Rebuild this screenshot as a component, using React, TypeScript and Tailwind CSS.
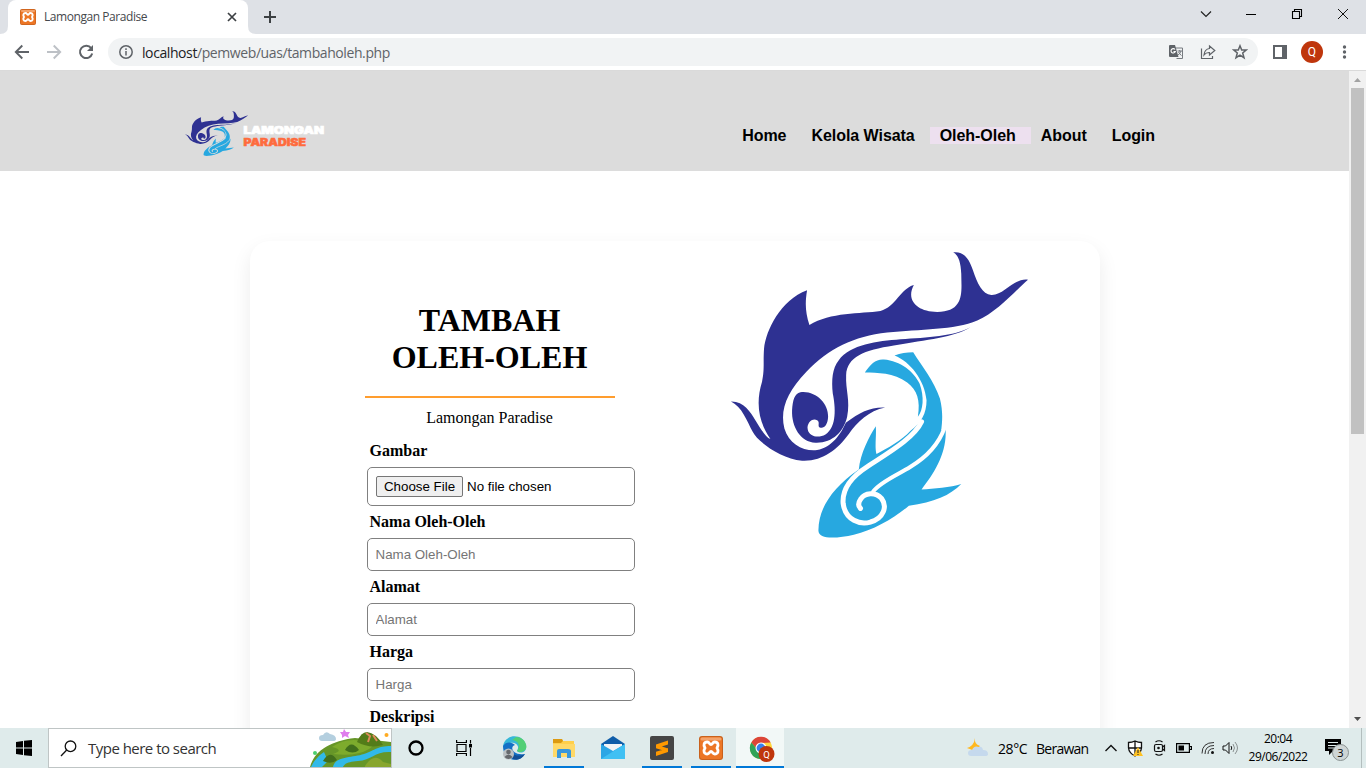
import React from 'react';

function FishLogo({ gap, className }: { gap: string; className: string }) {
  return (
    <svg className={className} viewBox="32 32 890 862" preserveAspectRatio="none">
      <g fill="#2e3192">
        <path d="M260 150C254 185 254 215 267 254C330 215 420 221 480 212C525 200 540 145 580 134C555 180 590 215 650 215C735 215 722 150 722 100C720 60 712 45 698 36C730 32 745 55 757 90C770 130 785 162 812 164C850 166 880 112 922 118C890 145 830 215 770 241C700 270 600 267 500 277C400 288 325 325 258 395C200 455 178 510 192 565C206 612 250 635 290 630C335 622 362 580 376 548C420 515 450 500 494 502C445 512 410 545 385 582C350 630 305 665 245 662C180 655 112 605 97 575C80 543 65 500 32 484C70 483 90 515 105 540C120 565 135 590 150 597C115 545 105 490 125 425C133 385 128 370 131 325C137 270 180 180 260 150Z" />
        <path d="M750 261C700 292 620 298 520 316C430 330 380 350 377 405C375 450 390 480 380 530C370 575 335 610 285 608C240 605 213 560 215 510C217 480 222 460 240 456C285 450 325 490 323 530C322 555 310 567 298 562C290 558 300 545 290 540C275 532 258 550 262 568C266 590 295 595 315 583C350 560 345 500 337 460C333 420 335 385 355 360C390 312 470 303 540 297C620 292 700 288 750 261Z" />
      </g>
      <g fill="#27a8e0">
        <path d="M433 397C450 372 466 356 490 358C540 362 580 395 597 430C612 470 608 510 592 530C600 480 590 450 560 427C520 397 470 398 433 397Z" />
        <path d="M522 346C540 338 558 336 578 336C605 380 640 420 658 475C668 515 665 545 662 570L675 565C680 640 640 700 603 748C640 747 690 742 722 732C690 765 640 788 565 797C520 835 460 870 400 884C350 895 292 900 294 870C295 800 340 740 415 688C420 640 445 590 466 558C468 590 462 620 468 642C500 625 545 600 570 572C602 548 618 520 618 480C612 420 570 365 522 346Z" />
      </g>
      <g fill="none" stroke={gap} strokeLinecap="round">
        <path strokeWidth="15" d="M603 545C580 595 500 640 440 680C390 712 365 750 368 790C375 842 420 855 450 846C488 836 502 800 483 775C465 755 433 757 420 778C412 790 413 798 420 805" />
        <path strokeWidth="12" d="M672 563C655 610 620 650 570 680C530 705 480 725 458 754" />
      </g>
    </svg>
  );
}

function Xampp({ className }: { className: string }) {
  return (
    <svg className={className} viewBox="0 0 24 24">
      <rect width="24" height="24" rx="3" fill="#c9611c" />
      <rect x="1" y="1" width="22" height="22" rx="2.500" fill="#ec7625" />
      <rect x="1.500" y="1.500" width="21" height="3" rx="1.500" fill="#f3a36c" />
      <path d="M8.300 6C5 6 4 9 6 12C4 15 5 18 8.300 18C10.600 18 10.400 15.400 12 15.400S13.400 18 15.700 18C19 18 20 15 18 12C20 9 19 6 15.700 6C13.400 6 13.600 8.600 12 8.600S10.600 6 8.300 6Z" fill="none" stroke="#fff" strokeWidth="2.900" strokeLinejoin="round" />
    </svg>
  );
}

function TabStrip() {
  return (
    <div className="flex h-[34px] shrink-0 bg-[#dee1e6]">
      <svg className="h-[34px] w-2" viewBox="0 0 8 34"><path d="M8 26V34H0Q8 34 8 26" fill="#fff" /></svg>
      <div className="flex h-[34px] w-[240px] items-center rounded-t-lg bg-white pl-3">
        <Xampp className="h-4 w-4" />
        <span className="ml-2 w-[183px] whitespace-nowrap text-[12px] tracking-[-0.44px] text-[#45484c]">Lamongan Paradise</span>
        <svg className="h-2.5 w-2.5" viewBox="0 0 10 10" stroke="#3c4043" strokeWidth="1.7"><path d="M1 1L9 9M9 1L1 9" /></svg>
      </div>
      <svg className="h-[34px] w-2" viewBox="0 0 8 34"><path d="M0 26V34H8Q0 34 0 26" fill="#fff" /></svg>
      <svg className="ml-2 mt-[11px] h-3 w-3" viewBox="0 0 12 12" stroke="#3c4043" strokeWidth="2"><path d="M6 0V12M0 6H12" /></svg>
      <div className="ml-auto flex items-start pt-2">
        <svg className="mr-[33px] h-3 w-3" viewBox="0 0 12 12" fill="none" stroke="#222" strokeWidth="1.200"><path d="M1 3.500L6 8.500L11 3.500" /></svg>
        <svg className="mr-[34px] h-3 w-3" viewBox="0 0 12 12" stroke="#000"><path d="M1 6.500H11" /></svg>
        <svg className="mr-[34px] h-3 w-3" viewBox="0 0 12 12" fill="none" stroke="#000" strokeWidth="1.100"><path d="M1.500 3.500H8.500V10.500H1.500ZM3.500 3.500V1.500H10.500V8.500H8.500" /></svg>
        <svg className="mr-[17px] h-3 w-3" viewBox="0 0 12 12" stroke="#111"><path d="M1 1L11 11M11 1L1 11" /></svg>
      </div>
    </div>
  );
}

function Toolbar() {
  return (
    <div className="flex h-9 shrink-0 items-center bg-white">
      <svg className="ml-[14px] h-4 w-4" viewBox="0 0 16 16" fill="none" stroke="#5f6368" strokeWidth="1.900"><path d="M15 8H2M8.300 1.500L1.800 8L8.300 14.500" /></svg>
      <svg className="ml-4 h-4 w-4" viewBox="0 0 16 16" fill="none" stroke="#bdc1c6" strokeWidth="1.900"><path d="M1 8H14M7.700 1.500L14.200 8L7.700 14.500" /></svg>
      <svg className="ml-4 h-4 w-4" viewBox="0 0 16 16"><path d="M13.200 4.200A6.200 6.200 0 1 0 14.200 9.500" fill="none" stroke="#5f6368" strokeWidth="2" /><path d="M15 1V7H9Z" fill="#5f6368" /></svg>
      <div className="ml-[14px] flex h-7 w-[1150px] items-center rounded-full bg-[#f1f3f4] pl-[11px]">
        <svg className="h-[14px] w-[14px]" viewBox="0 0 14 14" fill="none" stroke="#5f6368" strokeWidth="1.500"><circle cx="7" cy="7" r="6.200" /><path d="M7 6V10.500M7 3.300V4.900" /></svg>
        <span className="ml-[9px] whitespace-nowrap text-[14px] tracking-[-0.41px] text-[#5f6368]"><span className="text-[#202124]">localhost</span>/pemweb/uas/tambaholeh.php</span>
        <svg className="ml-auto h-[15px] w-[15px]" viewBox="0 0 15 15"><path d="M6 3H13.500V13.500H7.500" fill="none" stroke="#777b80" /><path d="M1 0H6L9.500 12H1Q0 12 0 11V1Q0 0 1 0" fill="#5f6368" /><path d="M6 4.500A2.200 2.200 0 1 0 6.300 6.500H4.500" fill="none" stroke="#fff" strokeWidth="1.100" /><path d="M8.500 6H13M10.700 5V6.500M12 6Q11 9 9 10M9.500 7Q11 9.500 12.500 10.500" fill="none" stroke="#777b80" /></svg>
        <svg className="ml-[16px] h-4 w-4" viewBox="0 0 16 16" fill="none" stroke="#5f6368" strokeWidth="1.200"><path d="M1.500 4.500V14.500H12.500V12" /><path d="M9.500 2L14.800 6.500L9.500 11V8.500Q6 8.300 4 11Q4.500 5.200 9.500 4.500Z" /></svg>
        <svg className="ml-[16px] mr-[10px] h-4 w-4" viewBox="0 0 16 16" fill="none" stroke="#5f6368" strokeWidth="1.500"><path d="M8 1.800L9.700 6H14.200L10.700 9L12 13.700L8 11.100L4 13.700L5.300 9L1.800 6H6.300Z" /></svg>
      </div>
      <svg className="ml-[15px] h-[14px] w-[14px]" viewBox="0 0 14 14"><path d="M0 0H14V14H0ZM2 2V12H9V2Z" fill="#5f6368" fillRule="evenodd" /></svg>
      <div className="ml-[14px] flex h-[22px] w-[22px] items-center justify-center rounded-full bg-[#bf360c] font-['Roboto',sans-serif] text-[12px] text-white">Q</div>
      <svg className="ml-[19px] h-4 w-[5px]" viewBox="0 0 5 16" fill="#5f6368"><circle cx="2.500" cy="3" r="1.700" /><circle cx="2.500" cy="8" r="1.700" /><circle cx="2.500" cy="13" r="1.700" /></svg>
    </div>
  );
}

function SiteHeader() {
  return (
    <header className="flex h-[100px] shrink-0 items-start bg-[#dcdcdc] pl-[185px] font-['Liberation_Sans',sans-serif]">
      <FishLogo gap="#dcdcdc" className="mt-[40px] h-[45px] w-[63px]" />
      <svg className="ml-[-6px] mt-[51px] h-8 w-[90px] font-['Inter',sans-serif] font-black" viewBox="0 0 90 32" fontSize="10.500">
        <text x="1.500" y="11.800" fill="#fff" stroke="#fff" strokeWidth=".7" textLength="80.500" lengthAdjust="spacingAndGlyphs">LAMONGAN</text>
        <text x="1.500" y="23.700" fill="#ff6b3d" stroke="#ff6b3d" strokeWidth=".5" fontSize="10" textLength="62.500" lengthAdjust="spacingAndGlyphs">PARADISE</text>
      </svg>
      <nav className="ml-auto mr-[179px] mt-[56px] flex text-[16px] font-bold leading-[17px] tracking-[-0.05px] text-black">
        {['Home', 'Kelola Wisata', 'Oleh-Oleh', 'About', 'Login'].map((t) => (
          <a key={t} className={t === 'Oleh-Oleh' ? 'bg-[#ede0ef] pl-[10px] pr-[15px]' : 'pl-[10px] pr-[15px]'}>{t}</a>
        ))}
      </nav>
    </header>
  );
}

function Field({ label }: { label: string }) {
  return (
    <>
      <label className="ml-[4.5px] block h-8 pt-[7px] text-[16px] font-bold leading-[18px]">{label}</label>
      <input placeholder={label} className="ml-0.5 block h-[33px] w-[268px] rounded-[5px] border border-[#808080] bg-white px-[7.500px] font-['Liberation_Sans',sans-serif] text-[13.333px] placeholder:text-[#757575]" />
    </>
  );
}

function Page() {
  return (
    <div className="flex min-h-0 flex-1 border-t border-[#dadada] bg-white">
      <main className="flex w-[1349px] flex-col overflow-hidden">
        <SiteHeader />
        <section className="ml-[250px] mt-[70px] flex h-[700px] w-[850px] shrink-0 rounded-[20px] bg-white font-['Liberation_Serif',serif] text-black shadow-[0_8px_20px_rgba(0,0,0,0.080)]">
          <form className="ml-[115px] w-[270px] pt-[61px]">
            <h1 className="w-[249px] text-center text-[32px] font-bold leading-[37px]">TAMBAH<br />OLEH-OLEH</h1>
            <div className="mt-[20px] h-[2px] w-[250px] bg-[#ff9d2e]" />
            <p className="mt-[11px] w-[249px] text-center text-[16px] leading-[18px]">Lamongan Paradise</p>
            <label className="ml-[4.5px] mt-[15px] block h-[25px] text-[16px] font-bold leading-[18px]">Gambar</label>
            <div className="ml-0.5 flex h-[39px] w-[268px] items-center rounded-[5px] border border-[#808080] pl-2 font-['Liberation_Sans',sans-serif] text-[13.333px]">
              <button type="button" className="h-[21px] w-[87px] whitespace-nowrap rounded-[2px] border border-[#767676] bg-[#efefef]">Choose File</button>
              <span className="ml-1">No file chosen</span>
            </div>
            <Field label="Nama Oleh-Oleh" />
            <Field label="Alamat" />
            <Field label="Harga" />
            <Field label="Deskripsi" />
          </form>
          <FishLogo gap="#fff" className="ml-[95.5px] mt-[10px] h-[287px] w-[297px]" />
        </section>
      </main>
      <div className="flex w-[17px] flex-col items-center bg-[#f1f1f1]">
        <svg className="h-[17px] w-[17px]" viewBox="0 0 17 17"><path d="M5 11L8.500 7L12 11Z" fill="#a3a3a3" /></svg>
        <div className="h-[346px] w-[13px] bg-[#c1c1c1]" />
        <svg className="mt-auto h-[17px] w-[17px]" viewBox="0 0 17 17"><path d="M5 6L8.500 10L12 6Z" fill="#505050" /></svg>
      </div>
    </div>
  );
}

function SearchArt() {
  return (
    <svg className="ml-auto h-[38px] w-[81px]" viewBox="0 0 81 38">
      <path d="M12 12Q9 12 9 9Q9 6 13 6Q16 1 20 5Q26 6 26 10Q26 12 23 12Z" fill="#b4cfdf" />
      <path d="M34 0L36 3L40 3L38 6L39 9L35 7L32 9L32 6L30 3L33 3Z" fill="#df7ded" />
      <circle cx="76.500" cy="6" r="2" fill="#ffab22" /><circle cx="5" cy="24" r="2" fill="#4bcf70" />
      <path d="M0 38C4 22 20 12 45 9L81 13V38Z" fill="#669628" />
      <path d="M1 38Q5 29 14 23L18 32L12 38ZM23 38C25 27 42 29 54 25S67 17 81 17V23C65 22 62 31 48 32C38 33 35 34 33 38Z" fill="#31b9e8" />
      <path d="M22 18Q37 7 57 13Q66 16 59 20Q46 28 23 25Q35 21 22 18" fill="#7dab2d" />
      <path d="M47 13Q51 3 57 3Q66 4 73 16Q60 20 47 13" fill="#537c19" /><path d="M56 4L60 7L58 13M63 6L67 12" stroke="#df8a5b" strokeWidth="2" fill="none" />
      <path d="M35 21Q41 10 49 21Q43 26 35 21M13 32Q20 20 27 31Q21 36 13 32" fill="#416f1c" />
      <path d="M55 37Q64 23 73 33L81 35V38H55Z" fill="#88a62e" />
    </svg>
  );
}

function Taskbar() {
  return (
    <div className="flex h-10 shrink-0 items-center bg-[#dfebeb] text-black">
      <svg className="ml-4 h-4 w-4" viewBox="0 0 16 16"><path d="M0 2L7 1V7.500H0ZM8 .8L16 0V7.500H8ZM0 8.500H7V15L0 14ZM8 8.500H16V16L8 15.200Z" /></svg>
      <div className="ml-4 flex h-10 w-[344px] items-center border border-[#bfc5c5] bg-white">
        <svg className="ml-[11px] h-[17px] w-[17px]" viewBox="0 0 17 17" fill="none" stroke="#111" strokeWidth="1.300"><circle cx="10.500" cy="6.300" r="5.300" /><path d="M6.700 10L1 16" /></svg>
        <span className="ml-[11px] whitespace-nowrap text-[15px] tracking-[-0.520px] text-[#333]">Type here to search</span>
        <SearchArt />
      </div>
      <svg className="ml-4 h-4 w-4" viewBox="0 0 16 16" fill="none" stroke="#000" strokeWidth="2.300"><circle cx="8" cy="8" r="6.500" /></svg>
      <svg className="ml-8 h-4 w-4" viewBox="0 0 16 16" fill="none" stroke="#000" strokeWidth="1.200"><path d="M.6 0V2.500H10.400V0M.6 16V13.500H10.400V16M1 4.500H10V11.500H1ZM14.500 0V3.500M14.500 8V16" /><path d="M13 4H16V7.500H13Z" fill="#000" stroke="none" /></svg>
      <div className="ml-[17px] mr-[6px] flex h-10 w-[49px] items-center justify-center">
        <svg className="mr-[-1px] h-[25px] w-[25px]" viewBox="0 0 25 25"><path d="M1 11C2-3 22-3 24 10C25 17 18 18 15 15C20 7 7 3 1 11" fill="#36b7d8" /><path d="M14 1C22 1 27 10 23 14C20 17 16 16 15 15C19 9 16 5 10 4Z" fill="#52cf76" /><path d="M1 10C4 5 10 6 13 9C7 11 11 20 23 18C17 28 1 25 1 10" fill="#1470c6" /><path d="M9 12C8 18 15 22 23 18C19 25 12 25 9 21Z" fill="#124f96" /><circle cx="6.500" cy="18" r="5.500" fill="#b9bfc2" /><circle cx="6.500" cy="16" r="2.300" fill="#65696d" /><path d="M2.500 21Q6.500 16 10.500 21Q6.500 25 2.500 21" fill="#65696d" /></svg>
      </div>
      <div className="flex h-10 w-10 justify-center border-b-2 border-[#0078d7] pt-[9px]">
        <svg className="mt-0.5 h-[20px] w-[22px]" viewBox="0 0 22 20"><path d="M0 0H9L10 2H21V18H0Z" fill="#ffcf4b" /><path d="M0 0H9L10 2L8 4H0Z" fill="#dc9a12" /><path d="M0 5H22V18H0Z" fill="#ffd968" /><path d="M4 19V12Q4 10 6 10H15Q18 10 18 12V19H14V14H8V19Z" fill="#3897dd" /></svg>
      </div>
      <div className="flex h-10 w-[58px] items-center justify-center">
        <svg className="h-[24px] w-[24px]" viewBox="0 0 24 24"><path d="M0 8L12 0L24 8V14H0Z" fill="#0f5da9" /><path d="M3 8H21V16H3Z" fill="#f2f5f7" /><path d="M0 8L12 15L24 8V23H0Z" fill="#2ba6e5" /><path d="M0 23L24 8V23Z" fill="#40c0f3" /></svg>
      </div>
      <div className="flex h-10 w-10 justify-center border-b-2 border-[#0078d7] pt-2">
        <svg className="h-6 w-6" viewBox="0 0 24 24"><rect width="24" height="24" rx="2" fill="#454545" /><path d="M6 8.500L18 4.500V8.500L6 12.300ZM6 8.500L18 12.500V16L6 12.300ZM6 15.800L18 12V16L6 20Z" fill="#ff9900" /></svg>
      </div>
      <div className="ml-[9px] flex h-10 w-10 justify-center border-b-2 border-[#0078d7] pt-2"><Xampp className="h-6 w-6" /></div>
      <div className="ml-[5px] flex h-10 w-12 justify-center border-b-2 border-[#0078d7] bg-[#f2f8f7] pt-2">
        <svg className="ml-[3px] h-[27px] w-[26px] font-['Roboto',sans-serif]" viewBox="0 0 26 27"><circle cx="12" cy="12" r="11" fill="#ffd53d" /><path d="M2.300 6.500A11 11 0 0 1 21.700 6.500L12 7L8 13Z" fill="#dc4538" /><path d="M2.300 6.500A11 11 0 0 0 11 23L16 15L8 13Z" fill="#30a358" /><circle cx="12" cy="12" r="5.500" fill="#fff" /><circle cx="12" cy="12" r="4.400" fill="#387fec" /><circle cx="17.500" cy="18" r="8" fill="#bf360c" /><text x="17.500" y="21.500" textAnchor="middle" fontSize="9.500" fill="#fff">Q</text></svg>
      </div>
      <div className="ml-auto flex h-10 items-center">
        <svg className="h-5 w-[22px]" viewBox="0 0 22 20"><path d="M8 0Q7 6 13 8L8 13L0 10Q7 8 8 0" fill="#ffb81f" /><path d="M4 18Q1 18 1 15Q1 12 5 12Q7 7 12 9Q15 8 16 12Q21 12 21 16Q21 18 18 18Z" fill="#c5d9ed" /></svg>
        <span className="ml-[9px] w-[38px] whitespace-nowrap text-[14px] tracking-[-0.4px]">28°C</span>
        <span className="w-[69px] whitespace-nowrap text-[14px] tracking-[-0.75px]">Berawan</span>
        <svg className="h-3 w-3" viewBox="0 0 12 12" fill="none" stroke="#111" strokeWidth="1.400"><path d="M.5 9L6 3.500L11.500 9" /></svg>
        <svg className="ml-[10px] h-[17px] w-[16px]" viewBox="0 0 16 17"><path d="M8 1Q11 2.500 14.500 2.500V8Q14 13 8 16Q2 13 1.500 8V2.500Q5 2.500 8 1ZM8 1V16M1 8H15" fill="#fff" stroke="#111" strokeWidth="1.300" /><path d="M11 7L16 16H6Z" fill="#ffc222" /><path d="M11 10V13M11 14V15" stroke="#222" /></svg>
        <svg className="ml-[10px] h-4 w-[14px]" viewBox="0 0 14 16" fill="none" stroke="#111" strokeWidth="1.200"><rect x="1.500" y="4.500" width="8" height="7" rx="1.500" /><path d="M9.500 7L11.500 5.500V10.500L9.500 9M2.500 2Q6-.5 9.500 2M2.500 14Q6 16.500 9.500 14" /><circle cx="5.500" cy="8" r=".7" fill="#111" /></svg>
        <svg className="ml-[9px] h-[10px] w-[16px]" viewBox="0 0 16 10"><path d="M.6.600H13.400V9.400H.6ZM13.500 3.500H15.400V6.500H13.500" fill="none" stroke="#000" strokeWidth="1.200" /><path d="M2.500 2.500H8V7.500H2.500Z" /></svg>
        <svg className="ml-[9px] h-[14px] w-[14px]" viewBox="0 0 14 14" fill="none" stroke="#333"><path d="M1 12.500Q1 1.500 13 1.500M4 13Q4 4.500 13 4.500M7 13Q7 7.500 13 7.500" /><circle cx="11.500" cy="11.500" r="1.500" fill="#111" stroke="none" /></svg>
        <svg className="ml-[7px] h-[14px] w-[17px]" viewBox="0 0 17 14" fill="none" stroke="#111"><path d="M1 5H3.500L7 1.500V12.500L3.500 9H1ZM9 5Q10.500 7 9 9" /><path d="M11 3Q14 7 11 11M13 1Q18 7 13 13" stroke="#8b9292" /></svg>
        <div className="ml-[7px] flex w-[64px] flex-col items-center text-[12px] leading-[18px] tracking-[-0.480px]"><span>20:04</span><span>29/06/2022</span></div>
        <svg className="ml-[14px] h-[25px] w-[26px] font-['Open_Sans',sans-serif]" viewBox="0 0 26 25"><path d="M1 3H17V15H9L5 19V15H1Z" /><path d="M4 6.500H14M4 9.500H14M4 12H10" stroke="#dfebeb" /><circle cx="16.500" cy="16.500" r="8" fill="#ced5d5" stroke="#8a9292" /><text x="16.500" y="20.500" textAnchor="middle" fontSize="11">3</text></svg>
        <div className="ml-[11px] mr-1 h-10 w-px bg-[#b3bebe]" />
      </div>
    </div>
  );
}

export default function App() {
  return (
    <div className="flex h-[768px] w-[1366px] flex-col overflow-hidden bg-white font-['Open_Sans',sans-serif]">
      <TabStrip />
      <Toolbar />
      <Page />
      <Taskbar />
    </div>
  );
}
